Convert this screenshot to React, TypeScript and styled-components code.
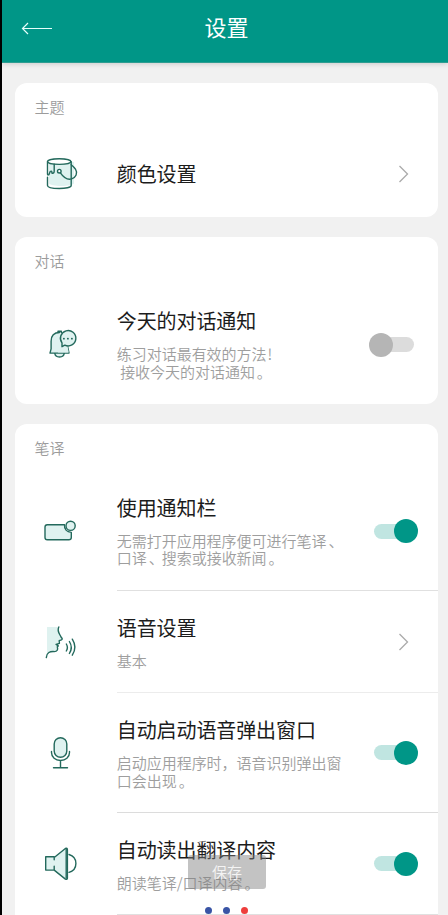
import React from 'react';
import styled, { createGlobalStyle } from 'styled-components';

const Global = createGlobalStyle`
  *, *::before, *::after { box-sizing: border-box; }
  html, body { margin: 0; padding: 0; overflow: hidden; }
  body { font-family: "Noto Sans CJK SC", "Noto Sans", sans-serif; }
`;

const Screen = styled.div`
  position: relative;
  width: 448px;
  height: 915px;
  overflow: hidden;
  background: #f1f1f1;
  border-left: 2px solid #000;
`;

const Header = styled.header`
  display: grid;
  grid-template-columns: 64px 1fr 64px;
  align-items: center;
  height: 63px;
  padding-bottom: 6px;
  background: #009687;
  border-bottom: 1px solid #2e9d91;
  box-shadow: 0 1px 5px rgba(0, 0, 0, 0.16);
`;

const BackButton = styled.button`
  display: flex;
  padding: 0 0 0 19px;
  border: 0;
  background: none;
  color: #e6fffb;
`;

const PageTitle = styled.h1`
  margin: 0;
  padding: 0 0 4px 3px;
  font-size: 22px;
  line-height: 32px;
  font-weight: 400;
  text-align: center;
  color: #fff;
`;

const Content = styled.main`
  display: flex;
  flex-direction: column;
  gap: 20px;
  padding: 20px 9.7px 0 12.8px;
`;

const Card = styled.section`
  flex: none;
  border-radius: 12px;
  background: #fff;

  &:last-child { padding-bottom: 40px; }
`;

const SectionLabel = styled.h2`
  height: 48px;
  margin: 0;
  padding: 14px 19.7px 0;
  font-size: 15px;
  line-height: 19px;
  font-weight: 350;
  letter-spacing: -0.1px;
  color: #9c9c9c;
`;

const Row = styled.div<{ $height: number }>`
  display: grid;
  grid-template-columns: 102px 1fr;
  height: ${(p) => p.$height}px;
`;

const IconCell = styled.div`
  display: flex;
  align-items: center;
  padding-left: 25px;
`;

const RowBody = styled.div<{ $divider?: string }>`
  display: flex;
  align-items: center;
  justify-content: space-between;
  border-bottom: ${(p) => (p.$divider ? `1px solid ${p.$divider}` : '0')};
`;

const TextBlock = styled.div<{ $lift: number }>`
  display: flex;
  flex-direction: column;
  gap: 10px;
  padding-bottom: ${(p) => p.$lift}px;
  white-space: pre;
`;

const RowTitle = styled.div`
  font-size: 20px;
  line-height: 28px;
  font-weight: 400;
  letter-spacing: -0.1px;
  color: #1c1c1c;
`;

const Description = styled.div`
  font-size: 15px;
  line-height: 17.5px;
  font-weight: 350;
  letter-spacing: -0.03px;
  color: #9e9e9e;
`;

const Mark = styled.span<{ $shift?: number }>`
  display: inline-block;
  width: 15px;
  padding-left: ${(p) => p.$shift ?? 2}px;
`;

const ChevronSlot = styled.span`
  display: flex;
  padding-right: 29.2px;
`;

const Switch = styled.span<{ $on: boolean }>`
  display: flex;
  align-items: center;
  justify-content: ${(p) => (p.$on ? 'flex-end' : 'flex-start')};
  width: 40px;
  height: 15px;
  margin-right: 24.6px;
  border-radius: 8px;
  background: ${(p) => (p.$on ? '#c0e5e1' : '#dcdcdc')};
`;

const Knob = styled.span<{ $on: boolean }>`
  flex: none;
  width: 24px;
  height: 24px;
  margin: ${(p) => (p.$on ? '0 -4.3px 0 0' : '0 0 0 -4.6px')};
  border-radius: 50%;
  background: ${(p) => (p.$on ? '#009687' : '#b5b5b5')};
`;

const Toast = styled.div`
  position: absolute;
  left: 186px;
  top: 855px;
  width: 78px;
  height: 34px;
  border-radius: 3px;
  background: rgba(128, 128, 128, 0.47);
  color: #f4f4f4;
  font-size: 15px;
  font-weight: 350;
  line-height: 34px;
  text-align: center;
`;

const Dots = styled.div`
  position: absolute;
  left: 202.5px;
  top: 907px;
  display: flex;
  gap: 11px;
`;

const Dot = styled.span<{ $color: string }>`
  width: 7px;
  height: 7px;
  border-radius: 50%;
  background: ${(p) => p.$color};
`;

const Icon = styled.svg`
  display: block;
  fill: none;
  stroke: #23695c;
  stroke-width: 1.4;
  stroke-linecap: round;
  stroke-linejoin: round;
  overflow: visible;
`;

const tint = '#dff2f0';

const BackArrow = () => (
  <svg width="32" height="14" viewBox="0 0 32 14" fill="none" stroke="currentColor" strokeWidth="1.2">
    <path d="M7 2 1.5 7.5 7 13M1.5 7.5H31" />
  </svg>
);

const Chevron = () => (
  <svg width="11" height="18" viewBox="0 0 11 18" fill="none" stroke="#aaa" strokeWidth="1.3">
    <path d="M1.5 1 9.5 9l-8 8" />
  </svg>
);

const BucketIcon = () => (
  <Icon width="40" height="40" viewBox="0 0 40 40">
    <path d="M9 8v21c0 4 25 4 25 0V8z" fill={tint} stroke="none" />
    <ellipse cx="19.2" cy="7.6" rx="11.7" ry="2.8" fill="#fff" />
    <path d="M7.5 7.6v12.5q0 1.3 1.4.6l1.3-3.2q1.8-1.1 1.7 1.5 2.3.8 2.3-2v-6.9M7.5 23.2v8.3c0 4 23.7 4 23.7 0V7.6" />
    <circle cx="19.3" cy="17.2" r="1.8" fill="#fff" />
    <path d="M20.4 18.8c3.6 5.2 7.5 7.3 11.2 6.1 4.5-1.5 6.2-6 4-9.5-1-1.7-2.4-3.2-4.4-4.7" />
  </Icon>
);

const BellIcon = () => (
  <Icon width="40" height="40" viewBox="0 0 40 40">
    <path d="M14.8 28.3c.4 5 9 5 9.4 0" fill={tint} />
    <path d="M18 7.5V6.2h3.4v1.3" fill={tint} />
    <path d="M19.7 7.5c-5.5 0-8.6 3.4-8.6 8.8v7.5L10 28.1h19l-1.3-6.3" fill={tint} />
    <path d="M19.7 8.2h4l4 7v7l1.1 5.2H18z" fill={tint} stroke="none" />
    <path d="M22 21.7v-3.8a7.7 7.7 0 1 1 2.8 2.3z" fill={tint} />
    <path d="M23.8 13.7h.2M27.8 13.7h.2M31.8 13.7h.2" strokeWidth="1.7" />
  </Icon>
);

const NotificationIcon = () => (
  <Icon width="40" height="40" viewBox="0 0 40 40">
    <path d="M24.5 12.8H7.3Q5 12.8 5 15.1v10.4q0 2.3 2.3 2.3h21.5q2.5 0 2.5-2.3v-5.1c-4.5-.5-7.2-3.5-6.8-7.6z" fill={tint} />
    <circle cx="30.6" cy="13.8" r="4.6" fill={tint} />
  </Icon>
);

const VoiceIcon = () => (
  <Icon width="40" height="40" viewBox="0 0 40 40">
    <path d="M7 5h11.5v6l3.7 5-3.7 4-2 9.5q-6.5-.3-9.5 2z" fill={tint} stroke="none" />
    <path d="M18.8 5c-2 4.2.5 6.5 2 9.5.5 1.5 2.5 2.3.6 3.3l-2.2.8.2 2.8-3.3 1.1 2.2 1.4-1 .9c.9 2.8-.1 4.8-3 4.8-4.2-.3-7.7.7-8 6" />
    <path d="M26.3 22q2.2 3.5 0 7M29.4 19.5q3.8 6 0 12M32.3 17.2q5.2 8.2 0 16" />
  </Icon>
);

const MicIcon = () => (
  <Icon width="40" height="40" viewBox="0 0 40 40">
    <rect x="14.2" y="4.7" width="12.6" height="19.6" rx="6.3" fill={tint} />
    <path d="M11.5 18.5v1c0 4.8 3.9 8 9 8s9-3.2 9-8v-1M20.5 27.5v7.3M13.5 34.8h14" />
  </Icon>
);

const SpeakerIcon = () => (
  <Icon width="40" height="40" viewBox="0 0 40 40">
    <path d="M14.2 12.8H5.7v13.3h8.5l11.2 9q2 .8 2-1.2V5.7q0-2-2-1.2l-11.2 9v2.3M14.2 22.3v3.8" fill={tint} />
    <path d="M29 10.5c9.2 2.8 9.2 15 0 17.8M26.2 5.3v29" />
  </Icon>
);

type SettingProps = {
  icon: React.ReactNode;
  title: string;
  height: number;
  description?: React.ReactNode;
  control: 'chevron' | 'on' | 'off';
  divider?: string;
  lift?: number;
};

const Setting = ({ icon, title, height, description, control, divider, lift = 0 }: SettingProps) => (
  <Row $height={height}>
    <IconCell>{icon}</IconCell>
    <RowBody $divider={divider}>
      <TextBlock $lift={lift}>
        <RowTitle>{title}</RowTitle>
        {description && <Description>{description}</Description>}
      </TextBlock>
      {control === 'chevron' ? (
        <ChevronSlot><Chevron /></ChevronSlot>
      ) : (
        <Switch $on={control === 'on'}><Knob $on={control === 'on'} /></Switch>
      )}
    </RowBody>
  </Row>
);

export default function App() {
  return (
    <>
      <Global />
      <Screen>
        <Header>
          <BackButton aria-label="返回"><BackArrow /></BackButton>
          <PageTitle>设置</PageTitle>
        </Header>
        <Content>
          <Card>
            <SectionLabel>主题</SectionLabel>
            <Setting icon={<BucketIcon />} title="颜色设置" height={86} control="chevron" />
          </Card>
          <Card>
            <SectionLabel>对话</SectionLabel>
            <Setting
              icon={<BellIcon />}
              title="今天的对话通知"
              height={119}
              description={<>练习对话最有效的方法<Mark $shift={1}>!</Mark>{'\n '}接收今天的对话通知<Mark>。</Mark></>}
              control="off"
              lift={2}
            />
          </Card>
          <Card>
            <SectionLabel>笔译</SectionLabel>
            <Setting
              icon={<NotificationIcon />}
              title="使用通知栏"
              height={119}
              description={<>无需打开应用程序便可进行笔译<Mark>、</Mark>{'\n'}口译<Mark>、</Mark>搜索或接收新闻<Mark>。</Mark></>}
              control="on"
              divider="#e0e0e0"
              lift={2}
            />
            <Setting
              icon={<VoiceIcon />}
              title="语音设置"
              height={102}
              description="基本"
              control="chevron"
              divider="#ececec"
            />
            <Setting
              icon={<MicIcon />}
              title="自动启动语音弹出窗口"
              height={120}
              description={<>启动应用程序时，语音识别弹出窗{'\n'}口会出现<Mark>。</Mark></>}
              control="on"
              divider="#dcdcdc"
            />
            <Setting
              icon={<SpeakerIcon />}
              title="自动读出翻译内容"
              height={102}
              description={<>朗读笔译/口译内容<Mark>。</Mark></>}
              control="on"
              divider="#e0e0e0"
            />
          </Card>
        </Content>
        <Toast>保存</Toast>
        <Dots>
          <Dot $color="#3954a5" />
          <Dot $color="#3954a5" />
          <Dot $color="#ee3e3c" />
        </Dots>
      </Screen>
    </>
  );
}
